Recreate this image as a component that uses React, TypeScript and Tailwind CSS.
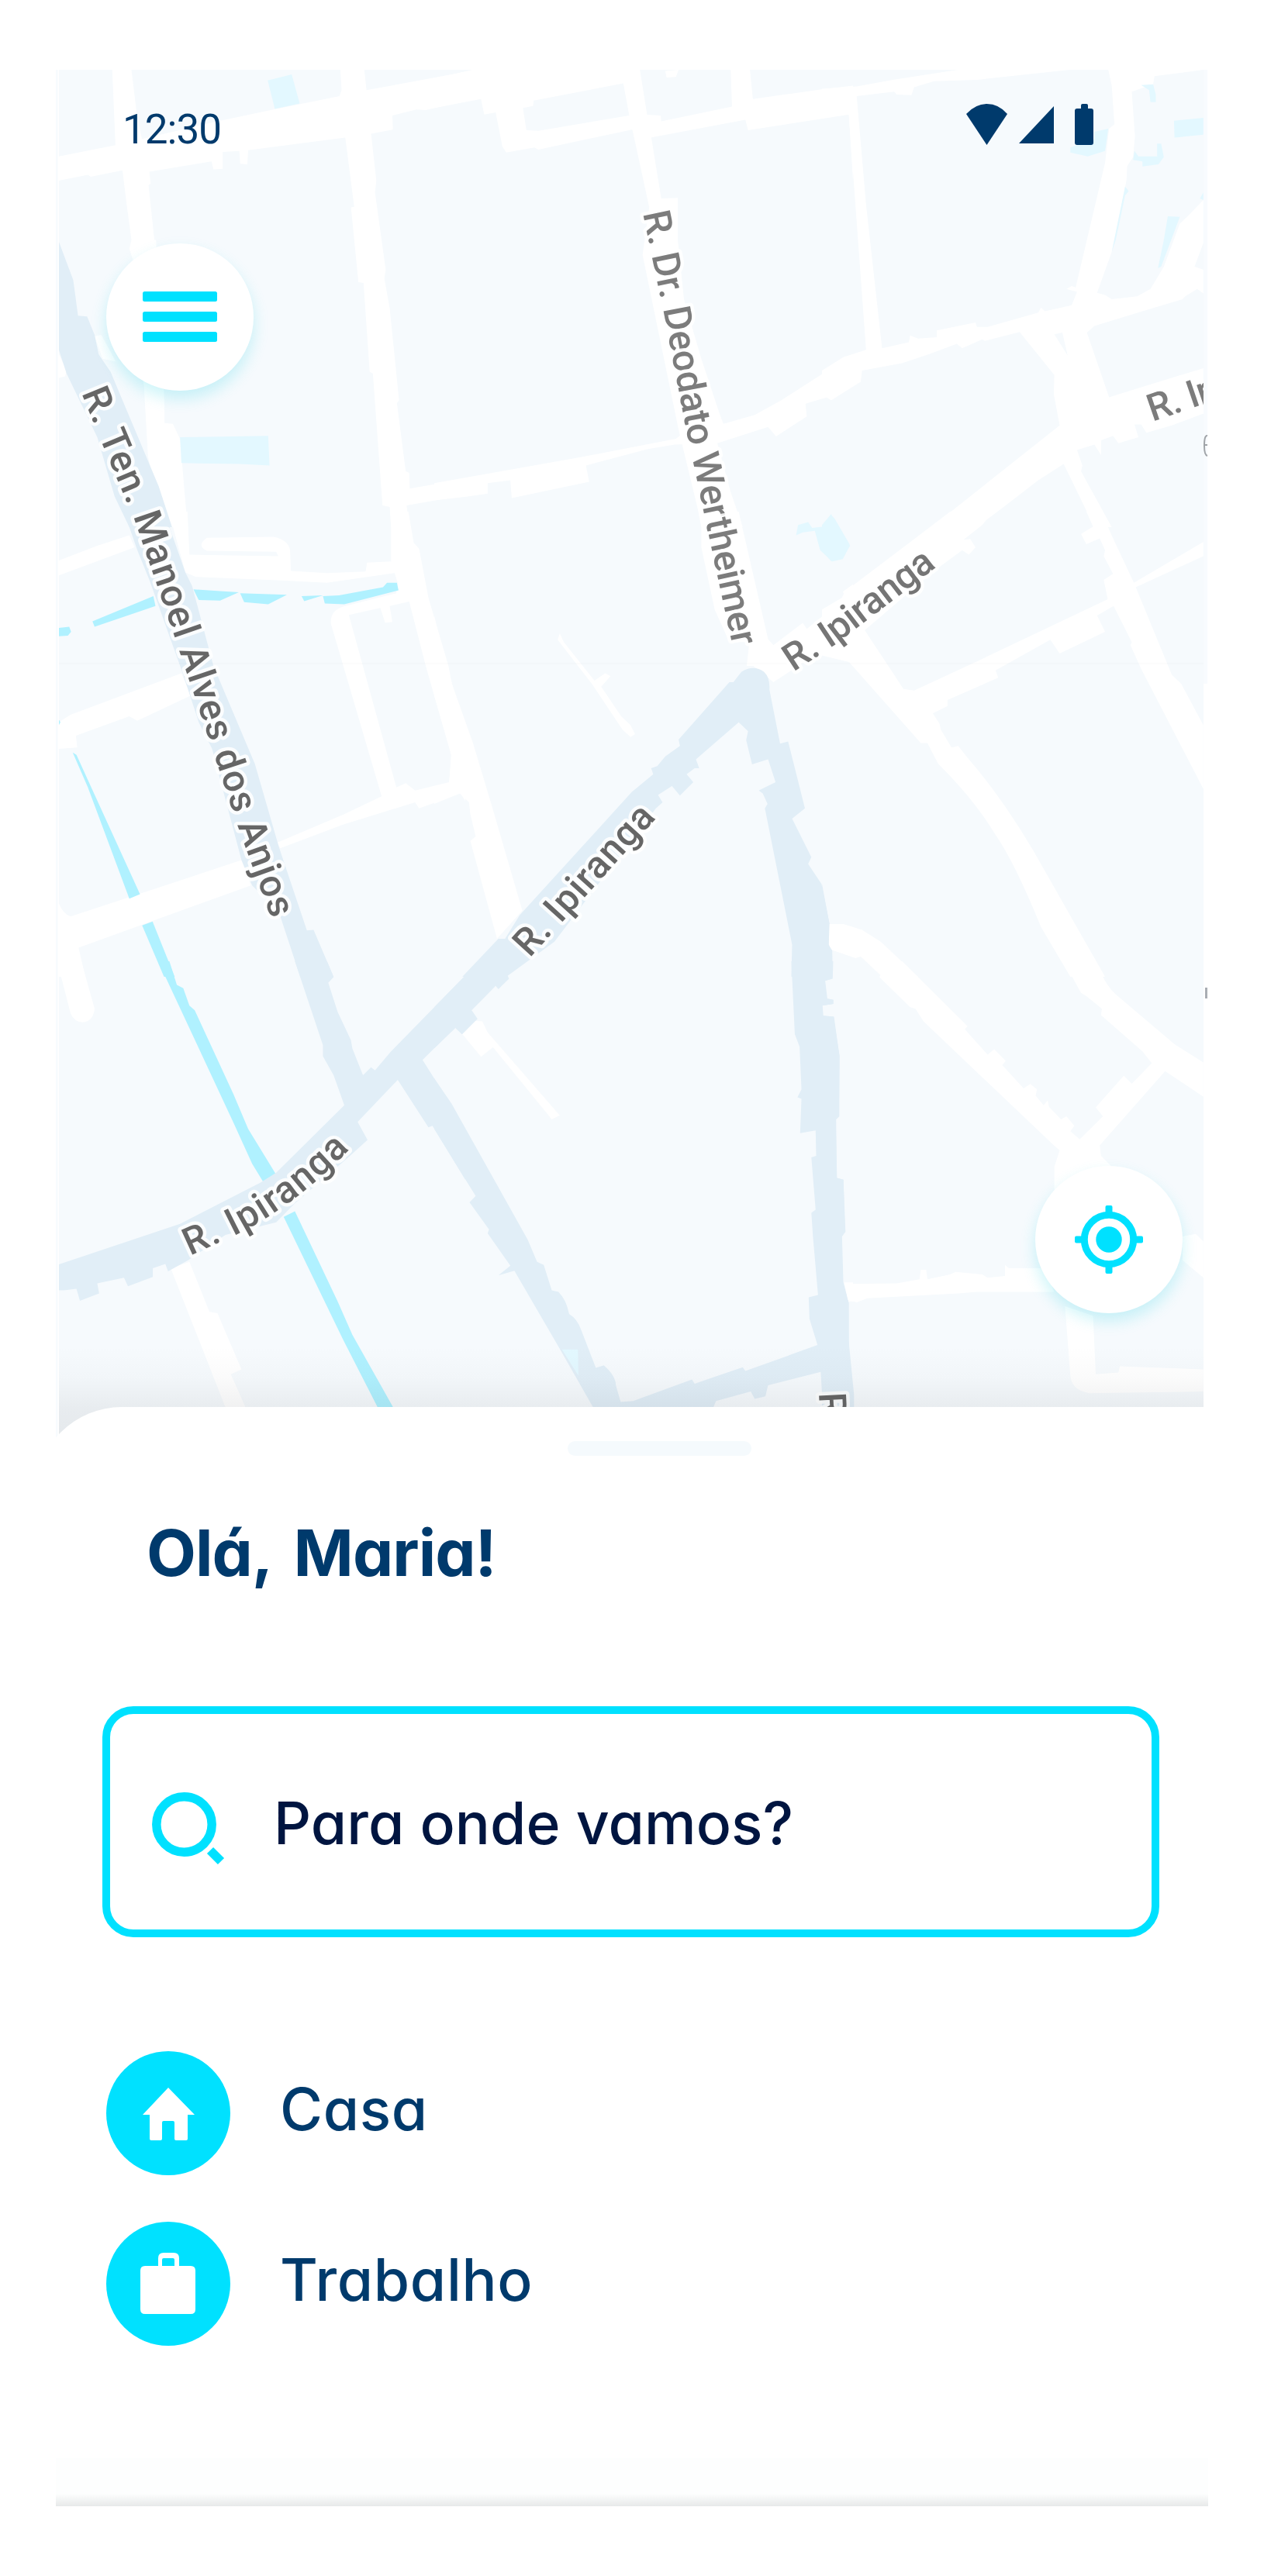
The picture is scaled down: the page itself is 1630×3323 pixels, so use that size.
import type { ReactNode } from "react";

type Tile = {
  x: number;
  y: number;
  h: number;
  white?: string[];
  blue?: string[];
  river?: string[];
  pond?: string[];
};

// Each tile covers 540 map pixels across and uses a 1568 x 1568 unit grid.
const tiles: Tile[] = [
  {
    x: 60, y: 80, h: 600,
    white: [
      "M246,26L318,26L340,190L385,370L390,410L382,415L405,610L420,700L325,670L310,630L318,600L300,480L285,370L258,280Z",
      "M320,600L410,600L440,1115L442,1217L473,1220L500,1270L528,1568L440,1568L380,1330L365,1095Z",
      "M46,318L258,280L640,200L850,160L1097,115L1105,95L1100,26L1190,26L1198,95L1568,33V132L1420,162L1385,160L1295,180L1297,228L1215,242L1118,255L755,297L752,345L725,343L722,300L660,303L660,360L625,362L618,335L385,370L285,365L165,387L155,380L46,400Z",
      "M1118,250L1215,240L1235,400L1230,440L1270,700L1265,730L1285,830L1320,1140L1312,1150L1345,1380L1358,1385L1360,1438L1568,1405V1460L1348,1495L1360,1568H1290L1285,1500L1258,1495L1222,1050L1210,1045L1187,745L1168,742L1140,490L1152,488Z",
      "M180,925L205,920L260,1010L210,1000Z",
      "M46,985L75,1040L70,1060L46,1065Z",
    ],
    pond: ["M828,62L918,42L948,140L855,158Z", "M500,1265L830,1260L835,1360L725,1355L505,1352Z"],
    blue: ["M46,605L100,735L118,855L152,858L180,920L195,985L240,1045L420,1430L470,1568H310L255,1465L190,1265L75,1050L46,970Z"],
  },
  {
    x: 560, y: 80, h: 600,
    white: [
      "M0,55L145,26H770L797,178L848,180L850,200L1115,150L1110,26H1182L1193,125L1450,92L1568,80V175L1175,230L1165,195L810,255L740,228L390,295L375,288L270,305L255,285L230,170L187,177L175,125L0,155ZM332,155L345,230L390,232L730,180L708,72L372,130L370,148Z",
      "M740,220L810,240L850,460L912,458L912,600L935,800L1000,1000L1070,1190L1085,1225L1060,1285L1110,1450L1155,1568H1000L985,1500L915,1240L780,650L805,490Z",
      "M0,1420L560,1330L905,1270L925,1255L1075,1222L1200,1190L1300,1140L1568,985V1085L1485,1140L1470,1130L1390,1152L1395,1195L1280,1262L1250,1230L1060,1285L900,1290L800,1305L568,1360L580,1415L290,1470L285,1410L200,1420V1455L125,1465L0,1478Z",
      "M865,30L915,26L905,50L870,52Z",
      "M1552,172L1568,172V400Z",
    ],
  },
  {
    x: 1060, y: 80, h: 600,
    white: [
      "M0,90L130,82L265,60L510,26H930L580,60L420,65L345,85L335,112L280,110L270,100L130,115L165,480L225,965L325,945L330,922L360,932L430,928V905L575,878L580,893H620L810,845L820,828L835,840L935,820L955,775L915,765L935,755L950,760L1060,340L1075,225L1095,210L1085,80L1072,26H1430L1245,48L1240,75L1160,100L1172,250L1165,320L1143,350L1140,400L1085,640L1030,778L1060,785L1085,800L1180,790L1230,765L1280,690L1340,545L1375,515L1428,465V610L1395,690L1428,700V780L1405,765L1360,790L1350,800L1200,840L1020,890L992,912L1075,1130L1428,1032V1185L1310,1225L1215,1250L1195,1222H1170L1185,1265L1110,1285L1090,1260L1045,1275V1325L1020,1290L955,1308L975,1360L970,1380L1085,1568H1020L905,1355L810,1410L680,1500L580,1568H410L890,1225L868,1120L870,1055L740,910L610,940L600,935L525,965L505,950L400,985L300,1015L150,1040L145,1078L35,1140L20,1130L0,1135V1040L80,995L165,970L100,172L0,185ZM870,918L920,990L900,912Z",
    ],
    pond: [
      "M1195,78L1240,75L1250,110V135H1230L1225,95Z",
      "M1318,198L1428,188V245L1320,255Z",
      "M930,288L1020,260V235L1072,225L1060,300L995,318L930,305Z",
      "M1170,300L1165,330L1200,335V352L1260,345L1280,320L1270,275H1255V318H1185Z",
      "M1295,520L1340,522L1270,690L1258,695L1280,600Z",
      "M1135,420L1148,435L1135,450L1100,600L1085,640Z",
      "M1428,440L1415,460L1428,465Z",
    ],
  },
  {
    x: 60, y: 660, h: 600,
    white: [
      "M46,165L190,115L310,80L330,120L46,215Z",
      "M458,0H528L535,145L868,150L860,135L600,132Q560,115 600,88L850,85Q905,95 912,130L915,200L1050,207L1195,202L1200,172L1290,168L1320,205L1050,240L880,232L560,220L520,205Z",
      "M1290,0H1355L1375,105L1395,125L1430,290L1505,520L1522,600L1568,715V975L1550,950L1395,1000L1380,980L1110,1055L875,1135L865,1115L1110,1022L1255,960L1065,378Q1060,335 1110,320L1310,275L1315,240L1290,170ZM1132,348L1310,930L1345,915L1380,940L1508,912L1515,820L1420,520L1358,303L1285,318L1295,372L1268,375L1250,325Z",
      "M46,710L90,685L505,545L540,620L340,705L310,690L110,755L115,795L46,800Z",
      "M46,1320Q60,1355 90,1365L730,1175L765,1260L120,1470L145,1568H46Z",
    ],
    river: [
      "M172,370L400,285L408,318L180,388Z",
      "M46,392L85,388L92,405L80,418L46,420Z",
      "M550,262L720,272L650,300L570,298Z",
      "M725,275L900,280L830,312L740,305Z",
      "M955,285L1035,282L965,302Z",
      "M1035,285L1095,282L1260,255L1275,240H1312L1318,265L1115,312L1042,310Z",
      "M98,812L112,820L350,1290L310,1305L155,930Z",
      "M358,1395L397,1382L480,1568H440Z",
      "M46,700L52,710L46,720Z",
    ],
    blue: ["M290,0H440L520,205L545,250L625,520L780,850L870,1130L975,1412L1000,1410L1075,1568H950L870,1350L770,1260L730,1175L620,800L570,710L510,545L385,230L340,130Z"],
  },
  {
    x: 560, y: 660, h: 600,
    white: [
      "M0,350L10,390L45,510L70,590L145,780L215,990L330,1345L235,1440L135,1110L155,1095L135,1020L130,980L95,950L0,985V935L55,915L65,820L0,620Z",
      "M1000,0H1140L1250,430L1270,450L1380,375L1395,395L1540,290L1530,270L1568,245V510L1430,480L1270,575L1250,560L1195,520H1170L1180,440H1105L1050,330L1000,120Z",
      "M470,410L485,440L600,570L640,545L660,555L625,590L700,690L735,720L752,750L735,760L705,735L590,580L462,432Z",
      "M1480,1395L1568,1400V1500L1480,1475Z",
    ],
    pond: ["M1355,80L1362,45L1400,35L1415,55L1460,50L1485,10L1500,25L1555,110L1530,160L1490,168L1445,130L1425,65L1380,70Z"],
    blue: [
      "M1105,575L1120,575L1150,540Q1195,515 1235,540Q1258,560 1255,600L1295,782L1325,775L1388,1000L1340,1035L1412,1165L1400,1188L1450,1255L1480,1390L1478,1465L1490,1480V1568H1337L1340,1460L1238,1000L1248,985L1230,950L1215,940L1278,912L1250,835L1190,852L1168,770L1175,740L1140,710L980,835L992,865L975,865L945,885L970,912L920,957L890,925L838,955L855,980L830,1000L450,1450L270,1568H105L240,1440H265L320,1360L740,945L820,885L812,865L835,858L865,825L920,790L915,768Z",
    ],
  },
  {
    x: 1060, y: 660, h: 600,
    white: [
      "M480,0H640L600,45L530,95L555,92L575,120L550,145L525,130L420,200L160,400L230,495L305,598L345,603L580,505L1070,295L1055,230L1090,210L1055,150L1060,130L1040,90L990,110L970,75L1015,50L990,0H1045L1090,90L1168,240L1428,102V150L1175,255L1310,550L1345,580L1428,720V935L1195,530L1155,450L1160,440L1092,318L1030,350L1060,405L890,478L855,432L650,535L660,560L470,635V655L415,680L440,715L445,735L485,795L510,790L545,830Q700,990 840,1220L960,1410L1060,1568H930L820,1400Q720,1180 650,1090Q570,970 435,850L395,780H370L75,480L0,470V330L75,290L85,270L320,110Z",
      "M25,1390L80,1390L150,1410L220,1450L360,1568H225L145,1500L125,1505L45,1480L25,1460Z",
    ],
    pond: ["M0,45L35,8L45,40L105,115L80,155L35,168L0,130Z"],
    blue: ["M0,1255L28,1390L25,1460L38,1480L40,1568H0Z"],
  },
  {
    x: 60, y: 1240, h: 640,
    white: [
      "M46,0H130L180,150Q175,190 135,193Q105,193 90,165L46,20Z",
      "M465,970L535,950L610,1108L640,1112L730,1290L690,1305L745,1410H670Z",
    ],
    river: [
      "M418,0H460L488,75L512,85L535,140L555,155L700,420L755,530L858,672L812,698L770,640L700,510Z",
      "M888,808L930,790L1090,1075L1145,1180L1298,1410H1240L1110,1195Z",
    ],
    blue: [
      "M930,0H1050L1075,50L1055,68L1090,160L1140,250L1145,275L1185,360L1215,335L1230,345L1290,285L1568,45V225L1555,230L1530,210L1408,312L1500,435L1568,540V690L1445,520L1430,525L1315,375L1165,508L1202,565L1130,620L930,765L860,825L670,865L530,945L455,980L445,957L398,970V998L305,1027L290,1000L190,1018L197,1050L125,1073L112,1035L65,1040H46V958L500,830L800,700L860,668L1115,455L1075,360L1035,300V265Z",
    ],
  },
  {
    x: 560, y: 1240, h: 640,
    white: [
      "M105,230L115,205L140,188L180,190L200,225L470,487L440,500L220,272L175,302Z",
      "M1535,1015H1568V1075H1550Z",
    ],
    blue: [
      "M0,145L170,0H320L272,40L280,55L240,88L230,78L140,155L162,182L105,230L80,210L0,275Z",
      "M0,370L65,450L350,880L385,950L410,960L440,1040L465,1045Q495,1070 505,1115Q535,1130 550,1165L605,1285L635,1277Q680,1310 680,1340L698,1393L745,1390L965,1322L975,1335L1155,1283L1165,1295L1435,1213L1405,1130L1402,1062L1437,1055L1418,870L1412,795L1428,785L1412,620L1430,615L1428,535L1370,543L1375,435L1360,430L1375,405L1368,270L1350,230L1337,0H1490L1488,55L1462,62L1470,118L1493,122V135L1452,140L1455,172L1495,175L1518,300L1515,490L1503,500L1508,685L1532,690L1538,855L1525,870L1530,1015L1552,1080L1553,1290L1568,1350V1410H1455L1447,1298L1250,1340L1240,1375L1200,1383L1185,1360L1055,1390L1045,1410H595L470,1225L300,978L240,993L285,962L200,860L205,848L132,762L155,742L0,530Z",
      "",
    ],
    pond: ["M478,1227H538L540,1310Z"],
  },
  {
    x: 1060, y: 1240, h: 640,
    white: [
      "M170,0H300L545,205L535,215L620,295L645,278L688,315L675,328L755,402L780,388L805,405L800,425L830,455L845,440L850,460L895,500L915,490L945,520L930,537L965,563L1052,490L1025,462L1130,362L1160,387L1235,322L1200,285L1045,170L1048,150L990,110L970,100L905,0H1025Q1060,75 1100,105L1320,262L1428,320V428L1285,347L1040,582L1045,615L1080,645V720L870,740V650L890,598L860,575L380,190L350,150L330,145L215,50L225,35Z",
      "M90,1020L280,1018L365,1005L370,975H390L395,1005L480,990L500,982L600,990L620,1000L685,995V960L700,970H830L870,1045H580L510,1050L170,1065L130,1078L95,1070Z",
      "M910,1090L1015,1120L1025,1305L1110,1300L1115,1280L1428,1290V1360L1000,1365Q935,1355 930,1310Z",
      "M1350,870L1400,862L1428,885V1000L1350,945Z",
    ],
    blue: ["M0,0H42L40,55L12,62L20,118L43,122V135L2,140L5,172L45,175L65,300V490L53,500L55,685L80,690L88,855L75,870L80,1015L100,1080V1200L120,1370V1410H0Z"],
  },
];

const labels = [
  { id: "anjos", text: "R. Ten. Manoel Alves dos Anjos", d: "M105,507L132,573L175,675L225,821L266,943L306,1064L356,1202", length: 722, color: "#666666" },
  { id: "deodato", text: "R. Dr. Deodato Wertheimer", d: "M829,275L857,409L885,555L918,710L950,858", length: 571, color: "#7c7c7c" },
  { id: "ipiranga-center", text: "R. Ipiranga", d: "M683,1236L864,1036", length: 244, color: "#666666" },
  { id: "ipiranga-east", text: "R. Ipiranga", d: "M1023,867L1075,833L1228,716", length: 230, color: "#757575" },
  { id: "ipiranga-west", text: "R. Ipiranga", d: "M245,1620L304,1593Q385,1553 456,1477L470,1462", length: 250, color: "#666666" },
  { id: "ipiranga-north", text: "R. Ip", d: "M1486,544L1640,491", length: 94, color: "#7c7c7c" },
  { id: "south", text: "R.", d: "M1056,1797L1060,1880", length: 44, color: "#666666" },
];

function CityMap() {
  return (
    <svg className="absolute left-0 top-0" width="1486" height="1790" viewBox="72 90 1486 1790">
      <defs>
        <clipPath id="map-area">
          <rect x="76" y="90" width="1476" height="1790" />
        </clipPath>
        <linearGradient id="sheet-shade" x1="0" y1="0" x2="0" y2="1">
          <stop offset="0" stopColor="#10141c" stopOpacity="0" />
          <stop offset="0.35" stopColor="#10141c" stopOpacity="0.017" />
          <stop offset="0.68" stopColor="#10141c" stopOpacity="0.06" />
          <stop offset="1" stopColor="#10141c" stopOpacity="0.075" />
        </linearGradient>
      </defs>
      <rect x="72" y="90" width="2.5" height="1790" fill="#f7fbfe" />
      <rect x="76" y="90" width="1476" height="1790" fill="#f6fafd" />
      <rect x="1552" y="90" width="5" height="792" fill="#f8fbfe" />
      <g clipPath="url(#map-area)">
        {tiles.map((t) => (
          <svg key={`${t.x}-${t.y}`} x={t.x} y={t.y} width="540" height={t.h} viewBox="0 0 1568 1568" preserveAspectRatio="none" fillRule="evenodd">
            {t.white?.map((d) => <path key={d} d={d} fill="#fff" />)}
            {t.river?.map((d) => <path key={d} d={d} fill="#b0f1ff" />)}
            {t.blue?.map((d) => <path key={d} d={d} fill="#e1eef7" />)}
            {t.pond?.map((d) => <path key={d} d={d} fill="#e3f8ff" />)}
          </svg>
        ))}
        <rect x="76" y="855" width="1476" height="2" fill="#000" opacity="0.012" />
        {labels.map((l) => (
          <g key={l.id}>
            <path id={l.id} d={l.d} fill="none" />
            <text fontFamily="Roboto, sans-serif" fontSize="49" fontWeight="500" fill={l.color} stroke="#ffffff" strokeOpacity="0.85" strokeWidth="9" strokeLinejoin="round" paintOrder="stroke">
              <textPath href={`#${l.id}`} textLength={l.length}>{l.text}</textPath>
            </text>
          </g>
        ))}
        <rect x="76" y="1735" width="1476" height="118" fill="url(#sheet-shade)" />
      </g>
      <path d="M1557,562Q1553,561 1553,575Q1553,587 1557,588M1553,574H1557" fill="none" stroke="#a0a4a8" strokeWidth="2" />
      <rect x="1554" y="1274" width="3" height="14" fill="#a9adb3" />
    </svg>
  );
}

function RoundButton({ label, children }: { label: string; children: ReactNode }) {
  return (
    <button aria-label={label} className="flex size-[190px] items-center justify-center rounded-full bg-white shadow-[0_10px_20px_rgba(0,205,225,0.2)]">
      {children}
    </button>
  );
}

function Place({ name, children }: { name: string; children: ReactNode }) {
  return (
    <li className="flex h-40 items-center gap-[64px]">
      <span className="flex size-40 items-center justify-center rounded-full bg-[#00e1ff]">
        <svg width="160" height="160" viewBox="0 0 160 160" fill="#fff">{children}</svg>
      </span>
      <span className="pb-[12px] tracking-[0.7px]">{name}</span>
    </li>
  );
}

export default function App() {
  return (
    <main className="min-h-[3323px] w-[1630px] bg-white pl-[72px] pt-[90px]">
      <div className="relative flex h-[3143px] w-[1486px] flex-col overflow-hidden">
        <CityMap />
        <section className="relative flex h-[1725px] flex-col">
          <div className="flex h-[224px] items-start justify-between pl-[86px] pr-[147px] pt-[41px]">
            <time className="pt-[3px] font-[Roboto] text-[53px] leading-[66px] tracking-[-1px] text-[#003a6c]">12:30</time>
            <svg width="165" height="56" viewBox="1246 132 165 56" fill="#003a6c" className="mt-px">
              <path d="M1246,147Q1258,134 1272.500,134Q1288,134 1299,147L1272.500,187Z" />
              <path d="M1314,185L1359,137V185Z" />
              <path d="M1394,140V136Q1394,134 1396,134H1401Q1403,134 1403,136V140H1407Q1410,140 1410,143V184Q1410,187 1407,187H1389Q1386,187 1386,184V143Q1386,140 1389,140Z" />
            </svg>
          </div>
          <div className="flex pl-[65px]">
            <RoundButton label="Menu">
              <svg width="98" height="66" viewBox="0 0 98 66" fill="#00e1ff">
                <rect x="1" width="96" height="13" rx="2.500" />
                <rect x="1" y="26" width="96" height="13" rx="2.500" />
                <rect x="1" y="52" width="96" height="13" rx="2.500" />
              </svg>
            </RoundButton>
          </div>
          <div className="mt-auto flex justify-end pb-[121px] pr-[33px]">
            <RoundButton label="Minha localização">
              <svg width="90" height="90" viewBox="-45 -45 90 90" fill="#00e1ff">
                <circle r="31.700" fill="none" stroke="#00e1ff" strokeWidth="9" />
                <circle r="16.700" />
                <rect x="-4.500" y="-44" width="9" height="11" rx="2" />
                <rect x="-4.500" y="33" width="9" height="11" rx="2" />
                <rect x="-44" y="-4.500" width="11" height="9" rx="2" />
                <rect x="33" y="-4.500" width="11" height="9" rx="2" />
              </svg>
            </RoundButton>
          </div>
        </section>
        <section className="relative -ml-[26px] flex h-[1356px] w-[1600px] flex-col rounded-tl-[111px] bg-white pl-[86px] pt-11 font-[Inter] [font-feature-settings:'cv11']">
          <div className="ml-[600px] h-[19px] w-[237px] rounded-full bg-[#f5fafd]" />
          <h1 className="ml-[57px] mt-[73px] h-[104px] whitespace-nowrap text-[83px] font-bold leading-[104px] tracking-[-1px] text-[#003a6c] [word-spacing:11px]">Olá, Maria!</h1>
          <label className="mt-[146px] flex h-[298px] w-[1363px] items-center rounded-[40px] border-[10px] border-[#00e1ff] pl-[54px] text-[#001540]">
            <svg width="96" height="96" viewBox="196 2311 96 96" fill="none" stroke="#00e1ff" strokeWidth="11.500" className="mt-[18px]">
              <circle cx="237.500" cy="2353.500" r="35.700" />
              <path d="M271,2387L285,2401" />
            </svg>
            <span className="ml-[61px] pt-[3px] text-[75px] font-[450] leading-none tracking-[0.1px]">Para onde vamos?</span>
          </label>
          <ul className="ml-[5px] mt-[147px] flex flex-col gap-[60px] text-[75px] font-[450] leading-none text-[#003a6c]">
            <Place name="Casa">
              <path d="M80,47L114,82H105V113Q105,115 103,115H90Q88,115 88,113V92Q88,90 86,90H74Q72,90 72,92V113Q72,115 70,115H58Q56,115 56,113V82H47Z" />
            </Place>
            <Place name="Trabalho">
              <path fillRule="evenodd" d="M67,57V47Q67,40 74,40H87Q94,40 94,47V57H109Q115,57 115,63V113Q115,119 109,119H50Q44,119 44,113V63Q44,57 50,57ZM72,57H88V49Q88,47 86,47H74Q72,47 72,49Z" />
            </Place>
          </ul>
        </section>
        <div className="relative flex h-[62px] shrink-0 flex-col justify-end bg-[#fdfefe]">
          <div className="h-4 bg-linear-to-b from-[#fdfefe] to-[#e7e9e9]" />
        </div>
      </div>
    </main>
  );
}
